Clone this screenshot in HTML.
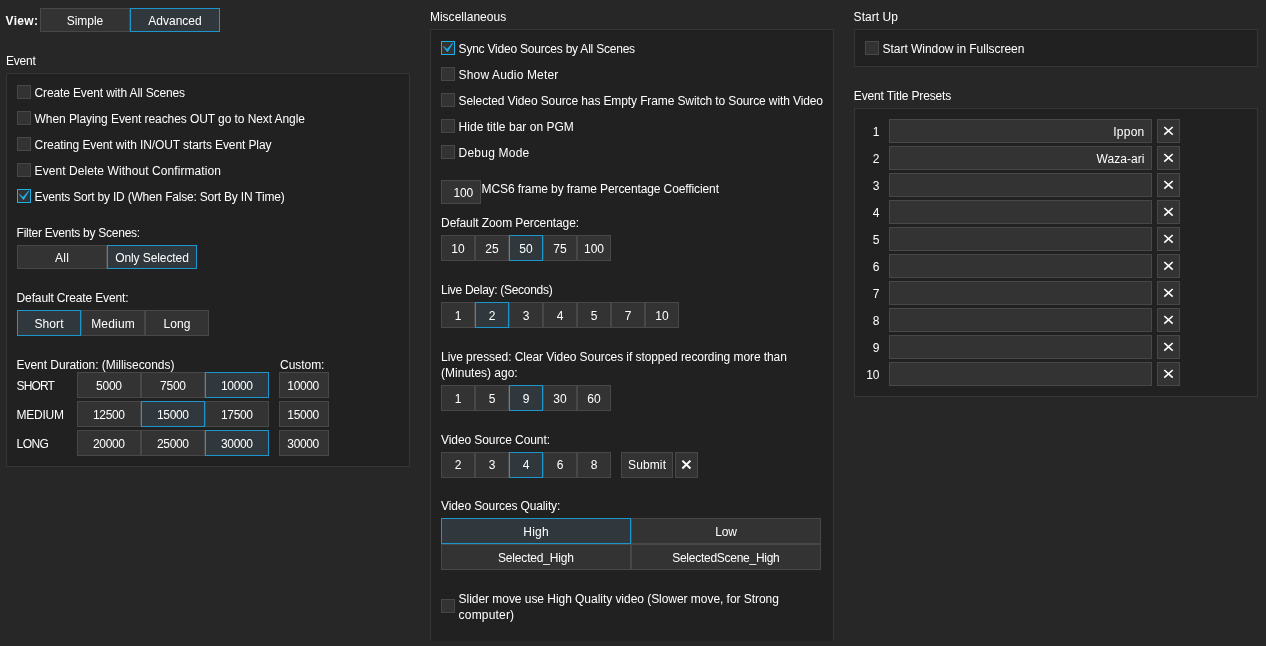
<!DOCTYPE html>
<html><head><meta charset="utf-8"><title>Settings</title>
<style>
html,body{margin:0;padding:0;}
body{width:1266px;height:646px;overflow:hidden;background:#272727;position:relative;font-family:"Liberation Sans",sans-serif;font-size:12px;color:#ffffff;}
.t{position:absolute;white-space:pre;line-height:16px;height:16px;}
.b{position:absolute;border:1px solid;}
.p{position:absolute;border:1px solid #353535;background:#212121;}
#w{position:absolute;left:0;top:0;width:1266px;height:646px;will-change:transform;}
</style></head><body><div id="w">
<span class="t" style="left:5.60px;top:13.44px;letter-spacing:0.295px;font-weight:bold;">View:</span>
<div class="b " style="left:40px;top:8px;width:88px;height:22px;background:#333333;border-color:#484848"></div>
<span class="t" style="left:66.69px;top:12.64px;letter-spacing:-0.015px;">Simple</span>
<div class="b " style="left:130px;top:8px;width:88px;height:22px;background:#30383d;border-color:#1c96cb"></div>
<span class="t" style="left:148.35px;top:12.64px;letter-spacing:-0.009px;">Advanced</span>
<span class="t" style="left:6.00px;top:52.64px;letter-spacing:-0.217px;">Event</span>
<div class="p" style="left:6px;top:73px;width:402px;height:392px;"></div>
<div class="b " style="left:17px;top:85px;width:12px;height:12px;background:#333333;border-color:#484848"></div>
<span class="t" style="left:34.60px;top:84.64px;letter-spacing:-0.135px;">Create Event with All Scenes</span>
<div class="b " style="left:17px;top:111px;width:12px;height:12px;background:#333333;border-color:#484848"></div>
<span class="t" style="left:34.60px;top:110.64px;letter-spacing:-0.077px;">When Playing Event reaches OUT go to Next Angle</span>
<div class="b " style="left:17px;top:137px;width:12px;height:12px;background:#333333;border-color:#484848"></div>
<span class="t" style="left:34.60px;top:136.64px;letter-spacing:-0.100px;">Creating Event with IN/OUT starts Event Play</span>
<div class="b " style="left:17px;top:163px;width:12px;height:12px;background:#333333;border-color:#484848"></div>
<span class="t" style="left:34.60px;top:162.64px;letter-spacing:0.067px;">Event Delete Without Confirmation</span>
<div class="b" style="left:17px;top:189px;width:12px;height:12px;background:#333333;border-color:#20aee6"><svg width="12" height="12" viewBox="0 0 12 12" style="position:absolute;left:0;top:0"><path d="M1.0 4.4 L1.6 4.0 L5.1 6.9 L10.5 0.7 L11.1 1.2 L5.6 10.2 Z" fill="#20aee6"/></svg></div>
<span class="t" style="left:34.60px;top:188.64px;letter-spacing:-0.202px;">Events Sort by ID (When False: Sort By IN Time)</span>
<span class="t" style="left:16.60px;top:225.14px;letter-spacing:-0.254px;">Filter Events by Scenes:</span>
<div class="b " style="left:17px;top:245px;width:88px;height:22px;background:#333333;border-color:#484848"></div>
<span class="t" style="left:55.08px;top:249.64px;letter-spacing:0.252px;">All</span>
<div class="b " style="left:107px;top:245px;width:88px;height:22px;background:#30383d;border-color:#1c96cb"></div>
<span class="t" style="left:115.16px;top:249.64px;letter-spacing:-0.086px;">Only Selected</span>
<span class="t" style="left:16.60px;top:290.14px;letter-spacing:-0.140px;">Default Create Event:</span>
<div class="b " style="left:17px;top:310px;width:62px;height:24px;background:#30383d;border-color:#1c96cb"></div>
<span class="t" style="left:34.45px;top:315.64px;letter-spacing:0.103px;">Short</span>
<div class="b " style="left:81px;top:310px;width:62px;height:24px;background:#333333;border-color:#484848"></div>
<span class="t" style="left:91.19px;top:315.64px;letter-spacing:0.185px;">Medium</span>
<div class="b " style="left:145px;top:310px;width:62px;height:24px;background:#333333;border-color:#484848"></div>
<span class="t" style="left:163.57px;top:315.64px;letter-spacing:0.049px;">Long</span>
<span class="t" style="left:16.60px;top:356.64px;letter-spacing:-0.054px;">Event Duration: (Milliseconds)</span>
<span class="t" style="left:280.10px;top:356.64px;letter-spacing:-0.055px;">Custom:</span>
<span class="t" style="left:16.60px;top:377.64px;letter-spacing:-0.879px;">SHORT</span>
<div class="b " style="left:77px;top:372px;width:62px;height:24px;background:#333333;border-color:#484848"></div>
<span class="t" style="left:95.95px;top:377.64px;letter-spacing:-0.201px;">5000</span>
<div class="b " style="left:141px;top:372px;width:62px;height:24px;background:#333333;border-color:#484848"></div>
<span class="t" style="left:159.95px;top:377.64px;letter-spacing:-0.201px;">7500</span>
<div class="b " style="left:205px;top:372px;width:62px;height:24px;background:#30383d;border-color:#1c96cb"></div>
<span class="t" style="left:221.02px;top:377.64px;letter-spacing:-0.355px;">10000</span>
<div class="b " style="left:279px;top:372px;width:48px;height:24px;background:#333333;border-color:#484848"></div>
<span class="t" style="left:287.32px;top:377.64px;letter-spacing:-0.355px;">10000</span>
<span class="t" style="left:16.60px;top:406.64px;letter-spacing:-0.262px;">MEDIUM</span>
<div class="b " style="left:77px;top:401px;width:62px;height:24px;background:#333333;border-color:#484848"></div>
<span class="t" style="left:93.02px;top:406.64px;letter-spacing:-0.355px;">12500</span>
<div class="b " style="left:141px;top:401px;width:62px;height:24px;background:#30383d;border-color:#1c96cb"></div>
<span class="t" style="left:157.02px;top:406.64px;letter-spacing:-0.355px;">15000</span>
<div class="b " style="left:205px;top:401px;width:62px;height:24px;background:#333333;border-color:#484848"></div>
<span class="t" style="left:221.02px;top:406.64px;letter-spacing:-0.355px;">17500</span>
<div class="b " style="left:279px;top:401px;width:48px;height:24px;background:#333333;border-color:#484848"></div>
<span class="t" style="left:287.32px;top:406.64px;letter-spacing:-0.355px;">15000</span>
<span class="t" style="left:16.60px;top:435.64px;letter-spacing:-0.604px;">LONG</span>
<div class="b " style="left:77px;top:430px;width:62px;height:24px;background:#333333;border-color:#484848"></div>
<span class="t" style="left:93.02px;top:435.64px;letter-spacing:-0.355px;">20000</span>
<div class="b " style="left:141px;top:430px;width:62px;height:24px;background:#333333;border-color:#484848"></div>
<span class="t" style="left:157.02px;top:435.64px;letter-spacing:-0.355px;">25000</span>
<div class="b " style="left:205px;top:430px;width:62px;height:24px;background:#30383d;border-color:#1c96cb"></div>
<span class="t" style="left:221.02px;top:435.64px;letter-spacing:-0.355px;">30000</span>
<div class="b " style="left:279px;top:430px;width:48px;height:24px;background:#333333;border-color:#484848"></div>
<span class="t" style="left:287.32px;top:435.64px;letter-spacing:-0.355px;">30000</span>
<span class="t" style="left:429.90px;top:8.64px;letter-spacing:0.019px;">Miscellaneous</span>
<div class="p" style="left:430px;top:29px;width:402px;height:611px;border-bottom:0;"></div>
<div class="b" style="left:441px;top:41px;width:12px;height:12px;background:#333333;border-color:#20aee6"><svg width="12" height="12" viewBox="0 0 12 12" style="position:absolute;left:0;top:0"><path d="M1.0 4.4 L1.6 4.0 L5.1 6.9 L10.5 0.7 L11.1 1.2 L5.6 10.2 Z" fill="#20aee6"/></svg></div>
<span class="t" style="left:458.60px;top:40.64px;letter-spacing:-0.216px;">Sync Video Sources by All Scenes</span>
<div class="b " style="left:441px;top:67px;width:12px;height:12px;background:#333333;border-color:#484848"></div>
<span class="t" style="left:458.60px;top:66.64px;letter-spacing:0.151px;">Show Audio Meter</span>
<div class="b " style="left:441px;top:93px;width:12px;height:12px;background:#333333;border-color:#484848"></div>
<span class="t" style="left:458.60px;top:92.64px;letter-spacing:-0.115px;">Selected Video Source has Empty Frame Switch to Source with Video</span>
<div class="b " style="left:441px;top:119px;width:12px;height:12px;background:#333333;border-color:#484848"></div>
<span class="t" style="left:458.60px;top:118.64px;letter-spacing:0.028px;">Hide title bar on PGM</span>
<div class="b " style="left:441px;top:145px;width:12px;height:12px;background:#333333;border-color:#484848"></div>
<span class="t" style="left:458.60px;top:144.64px;letter-spacing:0.218px;">Debug Mode</span>
<div class="b " style="left:441px;top:180px;width:38px;height:22px;background:#333333;border-color:#484848"></div>
<span class="t" style="left:453.62px;top:184.64px;letter-spacing:-0.177px;">100</span>
<span class="t" style="left:481.60px;top:181.14px;letter-spacing:-0.109px;">MCS6 frame by frame Percentage Coefficient</span>
<span class="t" style="left:441.10px;top:215.14px;letter-spacing:-0.091px;">Default Zoom Percentage:</span>
<div class="b " style="left:441px;top:235px;width:32px;height:24px;background:#333333;border-color:#484848"></div>
<span class="t" style="left:451.32px;top:240.64px;">10</span>
<div class="b " style="left:475px;top:235px;width:32px;height:24px;background:#333333;border-color:#484848"></div>
<span class="t" style="left:485.32px;top:240.64px;">25</span>
<div class="b " style="left:509px;top:235px;width:32px;height:24px;background:#30383d;border-color:#1c96cb"></div>
<span class="t" style="left:519.32px;top:240.64px;">50</span>
<div class="b " style="left:543px;top:235px;width:32px;height:24px;background:#333333;border-color:#484848"></div>
<span class="t" style="left:553.32px;top:240.64px;">75</span>
<div class="b " style="left:577px;top:235px;width:32px;height:24px;background:#333333;border-color:#484848"></div>
<span class="t" style="left:583.98px;top:240.64px;">100</span>
<span class="t" style="left:441.10px;top:281.64px;letter-spacing:-0.290px;">Live Delay: (Seconds)</span>
<div class="b " style="left:441px;top:302px;width:32px;height:24px;background:#333333;border-color:#484848"></div>
<span class="t" style="left:454.66px;top:307.64px;">1</span>
<div class="b " style="left:475px;top:302px;width:32px;height:24px;background:#30383d;border-color:#1c96cb"></div>
<span class="t" style="left:488.66px;top:307.64px;">2</span>
<div class="b " style="left:509px;top:302px;width:32px;height:24px;background:#333333;border-color:#484848"></div>
<span class="t" style="left:522.66px;top:307.64px;">3</span>
<div class="b " style="left:543px;top:302px;width:32px;height:24px;background:#333333;border-color:#484848"></div>
<span class="t" style="left:556.66px;top:307.64px;">4</span>
<div class="b " style="left:577px;top:302px;width:32px;height:24px;background:#333333;border-color:#484848"></div>
<span class="t" style="left:590.66px;top:307.64px;">5</span>
<div class="b " style="left:611px;top:302px;width:32px;height:24px;background:#333333;border-color:#484848"></div>
<span class="t" style="left:624.66px;top:307.64px;">7</span>
<div class="b " style="left:645px;top:302px;width:32px;height:24px;background:#333333;border-color:#484848"></div>
<span class="t" style="left:655.32px;top:307.64px;">10</span>
<span class="t" style="left:441.10px;top:348.64px;letter-spacing:-0.077px;">Live pressed: Clear Video Sources if stopped recording more than</span>
<span class="t" style="left:441.10px;top:364.64px;letter-spacing:-0.007px;">(Minutes) ago:</span>
<div class="b " style="left:441px;top:385px;width:32px;height:24px;background:#333333;border-color:#484848"></div>
<span class="t" style="left:454.66px;top:390.64px;">1</span>
<div class="b " style="left:475px;top:385px;width:32px;height:24px;background:#333333;border-color:#484848"></div>
<span class="t" style="left:488.66px;top:390.64px;">5</span>
<div class="b " style="left:509px;top:385px;width:32px;height:24px;background:#30383d;border-color:#1c96cb"></div>
<span class="t" style="left:522.66px;top:390.64px;">9</span>
<div class="b " style="left:543px;top:385px;width:32px;height:24px;background:#333333;border-color:#484848"></div>
<span class="t" style="left:553.32px;top:390.64px;">30</span>
<div class="b " style="left:577px;top:385px;width:32px;height:24px;background:#333333;border-color:#484848"></div>
<span class="t" style="left:587.32px;top:390.64px;">60</span>
<span class="t" style="left:441.10px;top:431.64px;letter-spacing:-0.091px;">Video Source Count:</span>
<div class="b " style="left:441px;top:452px;width:32px;height:24px;background:#333333;border-color:#484848"></div>
<span class="t" style="left:454.66px;top:456.64px;">2</span>
<div class="b " style="left:475px;top:452px;width:32px;height:24px;background:#333333;border-color:#484848"></div>
<span class="t" style="left:488.66px;top:456.64px;">3</span>
<div class="b " style="left:509px;top:452px;width:32px;height:24px;background:#30383d;border-color:#1c96cb"></div>
<span class="t" style="left:522.66px;top:456.64px;">4</span>
<div class="b " style="left:543px;top:452px;width:32px;height:24px;background:#333333;border-color:#484848"></div>
<span class="t" style="left:556.66px;top:456.64px;">6</span>
<div class="b " style="left:577px;top:452px;width:32px;height:24px;background:#333333;border-color:#484848"></div>
<span class="t" style="left:590.66px;top:456.64px;">8</span>
<div class="b " style="left:621px;top:452px;width:50px;height:24px;background:#333333;border-color:#484848"></div>
<span class="t" style="left:628.01px;top:456.64px;letter-spacing:0.123px;">Submit</span>
<div class="b " style="left:675px;top:452px;width:21px;height:24px;background:#333333;border-color:#484848"></div>
<svg style="position:absolute;left:678px;top:456px" width="16" height="16" viewBox="0 0 16 16"><path d="M4.35 4.61 L12.45 12.51 M4.35 12.51 L12.45 4.61" stroke="#ffffff" stroke-width="2.00" fill="none"/></svg>
<span class="t" style="left:441.10px;top:497.64px;letter-spacing:-0.125px;">Video Sources Quality:</span>
<div class="b " style="left:441px;top:518px;width:188px;height:24px;background:#30383d;border-color:#1c96cb"></div>
<span class="t" style="left:523.31px;top:523.64px;letter-spacing:0.228px;">High</span>
<div class="b " style="left:631px;top:518px;width:188px;height:24px;background:#333333;border-color:#484848"></div>
<span class="t" style="left:715.13px;top:523.64px;letter-spacing:-0.139px;">Low</span>
<div class="b " style="left:441px;top:544px;width:188px;height:24px;background:#333333;border-color:#484848"></div>
<span class="t" style="left:497.97px;top:549.64px;letter-spacing:-0.166px;">Selected_High</span>
<div class="b " style="left:631px;top:544px;width:188px;height:24px;background:#333333;border-color:#484848"></div>
<span class="t" style="left:672.22px;top:549.64px;letter-spacing:-0.265px;">SelectedScene_High</span>
<div class="b " style="left:441px;top:599px;width:12px;height:12px;background:#333333;border-color:#484848"></div>
<span class="t" style="left:458.60px;top:590.94px;letter-spacing:-0.043px;">Slider move use High Quality video (Slower move, for Strong</span>
<span class="t" style="left:458.60px;top:606.94px;letter-spacing:0.185px;">computer)</span>
<span class="t" style="left:853.60px;top:8.64px;letter-spacing:0.036px;">Start Up</span>
<div class="p" style="left:854px;top:29px;width:402px;height:36px;"></div>
<div class="b " style="left:865px;top:41px;width:12px;height:12px;background:#333333;border-color:#484848"></div>
<span class="t" style="left:882.60px;top:40.64px;letter-spacing:-0.039px;">Start Window in Fullscreen</span>
<span class="t" style="left:853.80px;top:87.64px;letter-spacing:-0.145px;">Event Title Presets</span>
<div class="p" style="left:854px;top:108px;width:402px;height:287px;"></div>
<span class="t" style="left:872.81px;top:123.64px;">1</span>
<div class="b " style="left:889px;top:119px;width:261px;height:22px;background:#333333;border-color:#484848"></div>
<span class="t" style="left:1113.25px;top:123.64px;letter-spacing:0.254px;">Ippon</span>
<div class="b " style="left:1157px;top:119px;width:21px;height:22px;background:#333333;border-color:#484848"></div>
<svg style="position:absolute;left:1160px;top:122px" width="16" height="16" viewBox="0 0 16 16"><path d="M4.30 5.00 L12.70 12.60 M4.30 12.60 L12.70 5.00" stroke="#ffffff" stroke-width="1.60" fill="none"/></svg>
<span class="t" style="left:872.81px;top:150.64px;">2</span>
<div class="b " style="left:889px;top:146px;width:261px;height:22px;background:#333333;border-color:#484848"></div>
<span class="t" style="left:1096.47px;top:150.64px;letter-spacing:0.067px;">Waza-ari</span>
<div class="b " style="left:1157px;top:146px;width:21px;height:22px;background:#333333;border-color:#484848"></div>
<svg style="position:absolute;left:1160px;top:149px" width="16" height="16" viewBox="0 0 16 16"><path d="M4.30 5.00 L12.70 12.60 M4.30 12.60 L12.70 5.00" stroke="#ffffff" stroke-width="1.60" fill="none"/></svg>
<span class="t" style="left:872.81px;top:177.64px;">3</span>
<div class="b " style="left:889px;top:173px;width:261px;height:22px;background:#333333;border-color:#484848"></div>
<div class="b " style="left:1157px;top:173px;width:21px;height:22px;background:#333333;border-color:#484848"></div>
<svg style="position:absolute;left:1160px;top:176px" width="16" height="16" viewBox="0 0 16 16"><path d="M4.30 5.00 L12.70 12.60 M4.30 12.60 L12.70 5.00" stroke="#ffffff" stroke-width="1.60" fill="none"/></svg>
<span class="t" style="left:872.81px;top:204.64px;">4</span>
<div class="b " style="left:889px;top:200px;width:261px;height:22px;background:#333333;border-color:#484848"></div>
<div class="b " style="left:1157px;top:200px;width:21px;height:22px;background:#333333;border-color:#484848"></div>
<svg style="position:absolute;left:1160px;top:203px" width="16" height="16" viewBox="0 0 16 16"><path d="M4.30 5.00 L12.70 12.60 M4.30 12.60 L12.70 5.00" stroke="#ffffff" stroke-width="1.60" fill="none"/></svg>
<span class="t" style="left:872.81px;top:231.64px;">5</span>
<div class="b " style="left:889px;top:227px;width:261px;height:22px;background:#333333;border-color:#484848"></div>
<div class="b " style="left:1157px;top:227px;width:21px;height:22px;background:#333333;border-color:#484848"></div>
<svg style="position:absolute;left:1160px;top:230px" width="16" height="16" viewBox="0 0 16 16"><path d="M4.30 5.00 L12.70 12.60 M4.30 12.60 L12.70 5.00" stroke="#ffffff" stroke-width="1.60" fill="none"/></svg>
<span class="t" style="left:872.81px;top:258.64px;">6</span>
<div class="b " style="left:889px;top:254px;width:261px;height:22px;background:#333333;border-color:#484848"></div>
<div class="b " style="left:1157px;top:254px;width:21px;height:22px;background:#333333;border-color:#484848"></div>
<svg style="position:absolute;left:1160px;top:257px" width="16" height="16" viewBox="0 0 16 16"><path d="M4.30 5.00 L12.70 12.60 M4.30 12.60 L12.70 5.00" stroke="#ffffff" stroke-width="1.60" fill="none"/></svg>
<span class="t" style="left:872.81px;top:285.64px;">7</span>
<div class="b " style="left:889px;top:281px;width:261px;height:22px;background:#333333;border-color:#484848"></div>
<div class="b " style="left:1157px;top:281px;width:21px;height:22px;background:#333333;border-color:#484848"></div>
<svg style="position:absolute;left:1160px;top:284px" width="16" height="16" viewBox="0 0 16 16"><path d="M4.30 5.00 L12.70 12.60 M4.30 12.60 L12.70 5.00" stroke="#ffffff" stroke-width="1.60" fill="none"/></svg>
<span class="t" style="left:872.81px;top:312.64px;">8</span>
<div class="b " style="left:889px;top:308px;width:261px;height:22px;background:#333333;border-color:#484848"></div>
<div class="b " style="left:1157px;top:308px;width:21px;height:22px;background:#333333;border-color:#484848"></div>
<svg style="position:absolute;left:1160px;top:311px" width="16" height="16" viewBox="0 0 16 16"><path d="M4.30 5.00 L12.70 12.60 M4.30 12.60 L12.70 5.00" stroke="#ffffff" stroke-width="1.60" fill="none"/></svg>
<span class="t" style="left:872.81px;top:339.64px;">9</span>
<div class="b " style="left:889px;top:335px;width:261px;height:22px;background:#333333;border-color:#484848"></div>
<div class="b " style="left:1157px;top:335px;width:21px;height:22px;background:#333333;border-color:#484848"></div>
<svg style="position:absolute;left:1160px;top:338px" width="16" height="16" viewBox="0 0 16 16"><path d="M4.30 5.00 L12.70 12.60 M4.30 12.60 L12.70 5.00" stroke="#ffffff" stroke-width="1.60" fill="none"/></svg>
<span class="t" style="left:866.14px;top:366.64px;">10</span>
<div class="b " style="left:889px;top:362px;width:261px;height:22px;background:#333333;border-color:#484848"></div>
<div class="b " style="left:1157px;top:362px;width:21px;height:22px;background:#333333;border-color:#484848"></div>
<svg style="position:absolute;left:1160px;top:365px" width="16" height="16" viewBox="0 0 16 16"><path d="M4.30 5.00 L12.70 12.60 M4.30 12.60 L12.70 5.00" stroke="#ffffff" stroke-width="1.60" fill="none"/></svg>
</div></body></html>
